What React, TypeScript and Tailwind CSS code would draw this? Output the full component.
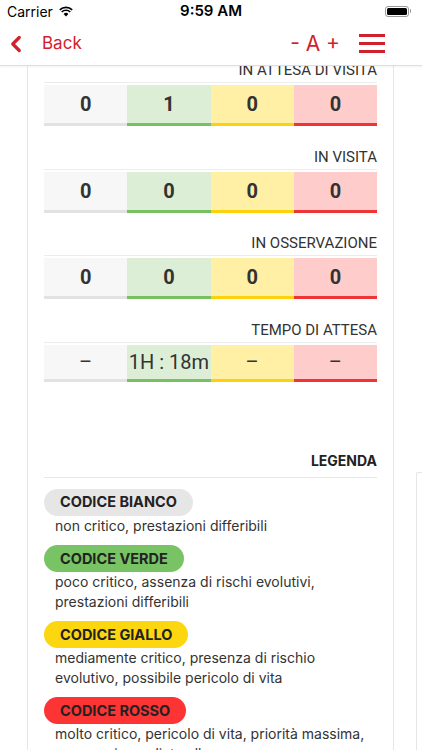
import { ChevronLeft } from 'lucide-react';

type Row = {
  label: string;
  values: string[];
  bold: boolean;
};

const rows: Row[] = [
  { label: 'IN ATTESA DI VISITA', values: ['0', '1', '0', '0'], bold: true },
  { label: 'IN VISITA', values: ['0', '0', '0', '0'], bold: true },
  { label: 'IN OSSERVAZIONE', values: ['0', '0', '0', '0'], bold: true },
  { label: 'TEMPO DI ATTESA', values: ['–', '1H : 18m', '–', '–'], bold: false },
];

const cellBg = ['bg-[#f7f7f7]', 'bg-[#dcefd6]', 'bg-[#fff0a6]', 'bg-[#ffcccc]'];
const barBg = ['bg-[#e2e2e2]', 'bg-[#78c061]', 'bg-[#fcd20f]', 'bg-[#ee3434]'];

const legend = [
  { name: 'CODICE BIANCO', pill: 'bg-[#e6e6e6]', text: 'non critico, prestazioni differibili' },
  { name: 'CODICE VERDE', pill: 'bg-[#78c465]', text: 'poco critico, assenza di rischi evolutivi, prestazioni differibili' },
  { name: 'CODICE GIALLO', pill: 'bg-[#fcd70f]', text: 'mediamente critico, presenza di rischio evolutivo, possibile pericolo di vita' },
  { name: 'CODICE ROSSO', pill: 'bg-[#fc3434]', text: 'molto critico, pericolo di vita, priorità massima, accesso immediato alle cure' },
];

function StatusBar() {
  return (
    <div className="h-[22px] flex items-center justify-between px-[7px] text-[14px] text-black relative">
      <div className="flex items-center gap-[6px]">
        <span>Carrier</span>
        <svg width="14" height="11" viewBox="0 0 14 11">
          <path d="M7 10.5 L4.6 7.9 A3.4 3.4 0 0 1 9.4 7.9 Z" fill="#000" />
          <path d="M2.7 6 A6.2 6.2 0 0 1 11.3 6" stroke="#000" strokeWidth="1.7" fill="none" />
          <path d="M0.8 3.9 A9 9 0 0 1 13.2 3.9" stroke="#000" strokeWidth="1.7" fill="none" />
        </svg>
      </div>
      <span className="absolute left-1/2 -translate-x-1/2 font-semibold text-[15px]">9:59 AM</span>
      <div className="flex items-center pr-[4px]">
        <div className="w-[24px] h-[11px] border border-[#999] rounded-[3px] p-[1px]">
          <div className="w-full h-full bg-black rounded-[1.5px]" />
        </div>
        <div className="w-[1.5px] h-[4px] bg-[#999] rounded-r ml-[1px]" />
      </div>
    </div>
  );
}

function NavBar() {
  return (
    <div className="h-[44px] shrink-0 flex items-center border-b border-[#dedede] shadow-[0_1px_2px_rgba(0,0,0,0.05)] bg-white relative z-10 text-[#d0222c]">
      <ChevronLeft className="ml-[3px]" size={26} strokeWidth={3} />
      <span className="ml-[13px] text-[17px]">Back</span>
      <span className="ml-auto text-[21px] whitespace-pre">- A +</span>
      <div className="ml-[19px] mr-[37px] w-[26px] flex flex-col gap-[5.5px]">
        <div className="h-[2.5px] bg-[#d0222c]" />
        <div className="h-[2.5px] bg-[#d0222c]" />
        <div className="h-[2.5px] bg-[#d0222c]" />
      </div>
    </div>
  );
}

function Section({ row }: { row: Row }) {
  return (
    <div className="mb-[18.5px]">
      <div className="h-[24px] leading-[24px] text-right text-[15px] text-[#333]" style={{ fontFamily: 'Roboto, sans-serif' }}>
        {row.label}
      </div>
      <div className="h-px bg-[#ececec] mb-[2px]" />
      <div className="grid grid-cols-4" style={{ fontFamily: 'Roboto, sans-serif' }}>
        {row.values.map((v, i) => (
          <div key={i} className="flex flex-col">
            <div
              className={`${cellBg[i]} ${row.bold ? 'h-[38px] font-bold' : 'h-[34px]'} flex items-center justify-center text-[20px] text-[#333] whitespace-nowrap`}
            >
              {v}
            </div>
            <div className={`h-[3px] ${barBg[i]}`} />
          </div>
        ))}
      </div>
    </div>
  );
}

export default function App() {
  return (
    <div className="w-[422px] h-[750px] bg-white overflow-hidden flex flex-col" style={{ fontFamily: 'Inter, sans-serif' }}>
      <StatusBar />
      <NavBar />
      <div className="flex-1 overflow-hidden flex items-start">
        <div className="w-[367px] shrink-0 ml-[27px] border-x border-[#e6e6e6] px-[16px] pb-[40px]">
          <div className="-mt-[8px]">
            {rows.map((r) => (
              <Section key={r.label} row={r} />
            ))}
          </div>
          <div className="pt-[51px]">
            <div className="text-right text-[14px] font-bold text-[#222] leading-[20px]">LEGENDA</div>
            <div className="h-px bg-[#e8e8e8] mt-[6px] mb-[10.5px]" />
            <div className="flex flex-col gap-[10px]">
              {legend.map((l) => (
                <div key={l.name}>
                  <span className={`inline-flex items-center h-[27px] px-[16px] rounded-full ${l.pill} text-[14.5px] font-bold text-[#222]`}>
                    {l.name}
                  </span>
                  <p className="pl-[11px] text-[14px] leading-[19.5px] text-[#333]">{l.text}</p>
                </div>
              ))}
            </div>
          </div>
        </div>
        <div className="shrink-0 ml-[22px] mt-[406px] w-[40px] h-[400px] border-l border-t border-[#e6e6e6] rounded-tl-[2px]" />
      </div>
    </div>
  );
}
